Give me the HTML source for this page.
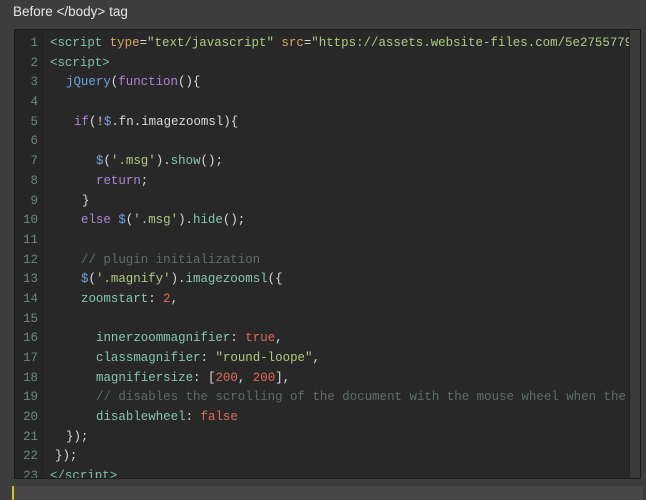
<!DOCTYPE html>
<html><head><style>
html,body{margin:0;width:646px;height:500px;background:#3d3d3d;overflow:hidden;font-family:"Liberation Sans",sans-serif}
.title{position:absolute;left:13px;top:4px;color:#e6e6e6;font-size:13.5px}
.ed{position:absolute;left:14px;top:29px;width:627px;height:450px;background:#282828;border:1px solid #1c1c1c;box-sizing:border-box;overflow:hidden}
.gut{position:absolute;left:0;top:0;width:30px;height:100%;background:#262626;border-right:1px solid #2c2c2c}
.sb{position:absolute;right:0;top:0;width:10px;height:100%;background:#3a3a3a;border-left:1px solid #222}
.code{position:absolute;left:0;top:4px;width:620px;font-family:"Liberation Mono",monospace;font-size:12.45px;line-height:19.7px;color:#d8d8d8}
.l{position:relative;height:19.7px}
.n{position:absolute;left:0;width:23px;text-align:right;color:#6b8785}
.t{position:absolute;white-space:pre}
.tg{color:#7cc0ac}.at{color:#d8a95c}.s{color:#aecb80}.b{color:#6fa3dc}.k{color:#b283d6}.r{color:#e26a5a}.c{color:#5e6c6c}.p{color:#83c8ac}
.bot{position:absolute;left:12px;top:486px;width:629px;height:14px;background:#474747;border-left:2px solid #d8c020}
</style></head><body>
<div class="title">Before &lt;/body&gt; tag</div>
<div class="ed"><div class="gut"></div>
<div class="code"><div class="l"><span class="n">1</span><span class="t" style="left:35px"><span class="tg">&lt;script</span> <span class="at">type</span>=<span class="s">"text/javascript"</span> <span class="at">src</span>=<span class="s">"https://assets.website-files.com/5e2755779</span></span></div><div class="l"><span class="n">2</span><span class="t" style="left:35px"><span class="tg">&lt;script&gt;</span></span></div><div class="l"><span class="n">3</span><span class="t" style="left:51px"><span class="b">jQuery</span>(<span class="k">function</span>(){</span></div><div class="l"><span class="n">4</span></div><div class="l"><span class="n">5</span><span class="t" style="left:59px"><span class="k">if</span>(!<span class="b">$</span>.fn.imagezoomsl){</span></div><div class="l"><span class="n">6</span></div><div class="l"><span class="n">7</span><span class="t" style="left:81px"><span class="b">$</span>(<span class="s">'.msg'</span>).<span class="p">show</span>();</span></div><div class="l"><span class="n">8</span><span class="t" style="left:81px"><span class="k">return</span>;</span></div><div class="l"><span class="n">9</span><span class="t" style="left:67px">}</span></div><div class="l"><span class="n">10</span><span class="t" style="left:66px"><span class="k">else</span> <span class="b">$</span>(<span class="s">'.msg'</span>).<span class="p">hide</span>();</span></div><div class="l"><span class="n">11</span></div><div class="l"><span class="n">12</span><span class="t c" style="left:66px">// plugin initialization</span></div><div class="l"><span class="n">13</span><span class="t" style="left:66px"><span class="b">$</span>(<span class="s">'.magnify'</span>).<span class="p">imagezoomsl</span>({</span></div><div class="l"><span class="n">14</span><span class="t" style="left:66px"><span class="p">zoomstart</span>: <span class="r">2</span>,</span></div><div class="l"><span class="n">15</span></div><div class="l"><span class="n">16</span><span class="t" style="left:81px"><span class="p">innerzoommagnifier</span>: <span class="r">true</span>,</span></div><div class="l"><span class="n">17</span><span class="t" style="left:81px"><span class="p">classmagnifier</span>: <span class="s">"round-loope"</span>,</span></div><div class="l"><span class="n">18</span><span class="t" style="left:81px"><span class="p">magnifiersize</span>: [<span class="r">200</span>, <span class="r">200</span>],</span></div><div class="l"><span class="n">19</span><span class="t c" style="left:81px">// disables the scrolling of the document with the mouse wheel when the</span></div><div class="l"><span class="n">20</span><span class="t" style="left:81px"><span class="p">disablewheel</span>: <span class="r">false</span></span></div><div class="l"><span class="n">21</span><span class="t" style="left:51px">});</span></div><div class="l"><span class="n">22</span><span class="t" style="left:40px">});</span></div><div class="l"><span class="n">23</span><span class="t" style="left:35px"><span class="tg">&lt;/script&gt;</span></span></div></div>
<div class="sb"></div>
</div>
<div class="bot"></div>
</body></html>
